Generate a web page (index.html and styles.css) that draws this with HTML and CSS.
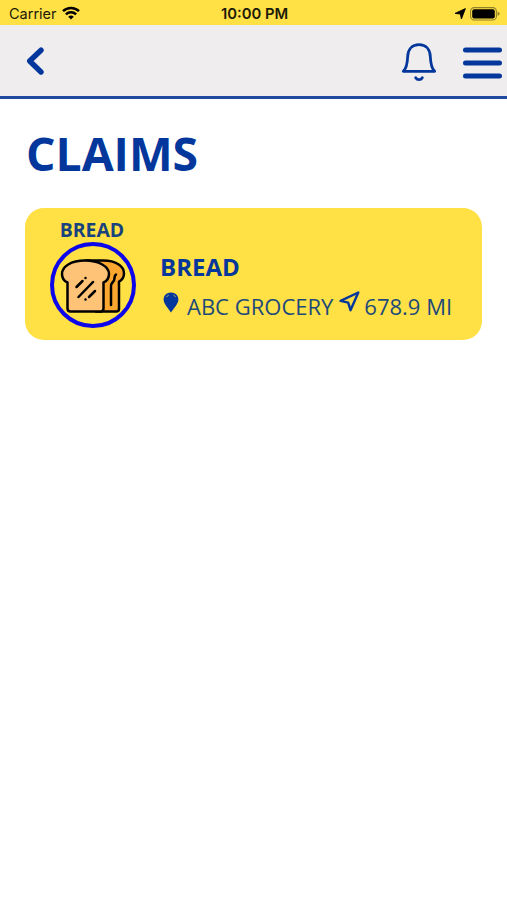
FILE: index.html
```html
<!DOCTYPE html>
<html lang="en">

<head>
	<meta charset="UTF-8">
	<title>Claims</title>
	<link rel="stylesheet" href="styles.css">
</head>

<body>
	<div class="status">
		<div class="status-left">
			<span class="carrier">Carrier</span>
			<svg class="wifi" width="18" height="14" viewBox="0 0 18 14" fill="none" stroke="#000" stroke-width="2.5">
				<path d="M1 5.2a11.3 11.3 0 0 1 16 0" />
				<path d="M3.9 8.4a7.2 7.2 0 0 1 10.2 0" />
				<path d="M9 13.6L6.2 10.8a4 4 0 0 1 5.6 0z" fill="#000" stroke="none" />
			</svg>
		</div>
		<span class="time">10:00 PM</span>
		<div class="status-right">
			<svg class="arrow" width="12" height="12" viewBox="0 0 12 12">
				<path d="M11.4.6L7.4 11 6.4 6 1 5.4z" stroke="#000" stroke-width=".9" stroke-linejoin="round" />
			</svg>
			<svg class="battery" width="30" height="14" viewBox="0 0 30 14">
				<rect x=".6" y=".6" width="25.8" height="12.4" rx="3.6" fill="none" stroke="#8f8029" stroke-width="1.1" />
				<rect x="2.2" y="2.2" width="22.6" height="9.2" rx="2" />
				<path d="M27.6 4.6q2 .7 2 2.2t-2 2.2z" fill="#8f8029" />
			</svg>
		</div>
	</div>

	<header class="header">
		<svg class="back" width="18" height="30" viewBox="0 0 18 30" fill="none" stroke="#04379c" stroke-width="5.4" stroke-linecap="round" stroke-linejoin="round">
			<path d="M15 4.2L3.7 15 15 26" />
		</svg>
		<div class="header-right">
			<svg class="bell" width="36" height="40" viewBox="0 0 36 40" fill="none" stroke="#04379c" stroke-width="2.8" stroke-linecap="round" stroke-linejoin="round">
				<path d="M2.3 29.3H33.7C30.4 26.5 29.6 21 29.3 14.5C29 7.5 25 2.7 18 2.7S7 7.5 6.700 14.5C6.400 21 5.600 26.5 2.3 29.3z" />
				<path d="M14.7 35.8a3.8 3.8 0 0 0 6.6 0" />
			</svg>
			<svg class="menu" width="40" height="34" viewBox="0 0 40 34" stroke="#04379c" stroke-width="5" stroke-linecap="round">
				<path d="M3.5 4h34M3.5 17h34M3.5 30h34" />
			</svg>
		</div>
	</header>

	<main class="content">
		<h1 class="title">CLAIMS</h1>

		<section class="card">
			<div class="item">
				<span class="item-name">BREAD</span>
				<div class="item-pic">
					<svg class="bread" width="66" height="54" viewBox="0 0 66 54" stroke="#000" stroke-width="2.5" stroke-linecap="round" stroke-linejoin="round">
						<path d="M26 1.6h17c13 0 21 5.4 21 12.8 0 4-2 6.5-5 8.2V50q0 2.5-3 2.5H36z" fill="#fba72f" />
						<path d="M25 1.6C11 1.6 2 7.5 2 15c0 4 2 7 5.5 8.5V49.5q0 3 3 3h30q3 0 3-3V23.5c3.5-1.5 5.5-4.5 5.5-8.5C49 7.5 39 1.6 25 1.6z" fill="#fec377" />
						<path d="M56 15.5q-1.5 1-1.5 3.5t-2 4.5-1.5 4.5v18" fill="none" />
						<path d="M16.5 28l6-6M18.5 38L33 23M29 38l6-6" fill="none" />
						<path d="M25.5 19v.1M25.5 40.5v.1" fill="none" />
					</svg>
				</div>
			</div>
			<div class="info">
				<h2 class="info-name">BREAD</h2>
				<div class="place">
					<svg class="pin" width="16" height="21" viewBox="0 0 16 21">
						<path d="M8 .4C3.6.4.6 3.5.6 7.5.6 12 5.500 16.500 8 20.500c2.500-4 7.400-8.500 7.400-13C15.400 3.500 12.400.4 8 .4z" fill="#04379c" />
						<path d="M3.4 5.2q.8-1.6 2.4-2.2M10.4 3q1.5.6 2.2 2" fill="none" stroke="#a9a56b" stroke-width="1" />
					</svg>
					<span class="store">ABC GROCERY</span>
					<svg class="nav" width="21" height="21" viewBox="0 0 21 21" fill="none" stroke="#04379c" stroke-width="2.4" stroke-linejoin="round">
						<path d="M19.3 1.5L11.5 19.2 9.2 11.6 1.6 9.8z" />
					</svg>
					<span class="distance">678.9 MI</span>
				</div>
			</div>
		</section>
	</main>
</body>

</html>
```
FILE: styles.css
```css
body,
h1,
h2 {
	margin: 0;
}

body {
	background-color: #fff;
	color: #04379c;
	font-family: "Open Sans", sans-serif;
}

svg {
	display: block;
	flex: none;
}

/* status bar */
.status {
	display: grid;
	grid-template-columns: 1fr auto 1fr;
	align-items: center;
	box-sizing: border-box;
	height: 25px;
	padding: 2px 7px 0 9px;
	background-color: #ffe045;
	color: #1c1a08;
	font: 14.5px/20px Inter, sans-serif;
}

.status-left,
.status-right {
	display: flex;
	align-items: center;
}

.status-left {
	gap: 5px;
}

.status-right {
	justify-content: flex-end;
	gap: 4px;
}

.time {
	font-size: 14.8px;
	font-weight: 600;
}

.wifi {
	margin-top: -1px;
}

/* header */
.header {
	display: flex;
	align-items: center;
	justify-content: space-between;
	box-sizing: border-box;
	height: 74px;
	padding: 0 5px 0 26px;
	border-bottom: 3px solid #2149a0;
	background-color: #efedee;
}

.header-right {
	display: flex;
	align-items: center;
	gap: 25px;
}

.menu {
	margin-top: 4px;
}

.bell {
	margin-top: 3px;
}

/* page */
.content {
	padding: 22px 25px 0;
}

.title {
	margin-left: 1px;
	font-size: 46.3px;
	line-height: 66px;
	font-weight: 700;
}

.card {
	display: flex;
	box-sizing: border-box;
	height: 132px;
	margin-top: 21px;
	padding-left: 24px;
	border-radius: 19px;
	background-color: #ffe045;
}

.item {
	display: flex;
	flex-direction: column;
	align-items: center;
	width: 87px;
	padding-top: 9px;
}

.item-name {
	margin-left: -1px;
	color: #17427e;
	font-size: 19.4px;
	line-height: 25px;
	font-weight: 700;
}

.item-pic {
	display: flex;
	align-items: center;
	justify-content: center;
	box-sizing: border-box;
	width: 86px;
	height: 86px;
	border: 4px solid #0d06e8;
	border-radius: 50%;
}

.bread {
	margin-top: 1px;
}

.info {
	padding: 43px 0 0 24px;
}

.info-name {
	font-size: 24px;
	line-height: 32px;
	font-weight: 700;
}

.place {
	display: flex;
	align-items: center;
	margin-top: 7px;
	color: #1d4a7a;
	font-size: 22px;
	line-height: 32px;
	white-space: nowrap;
}

.pin {
	margin: -8px 8px 0 3px;
}

.nav {
	margin: -9px 4px 0 6px;
}
```
